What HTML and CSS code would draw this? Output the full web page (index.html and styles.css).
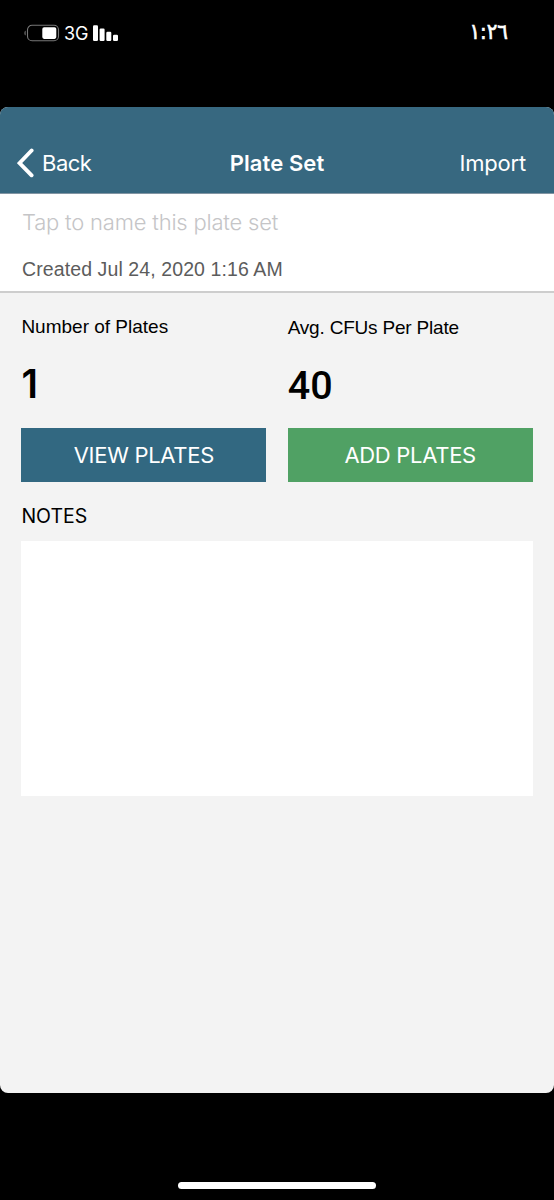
FILE: index.html
```html
<!DOCTYPE html>
<html lang="en">

<head>
  <meta charset="UTF-8" />
  <meta name="viewport" content="width=device-width, initial-scale=1.0, viewport-fit=cover">
  <meta name="theme-color" content="#000000">
  <title>Plate Set</title>
  <link rel="stylesheet" href="styles.css">
</head>

<body>
  <div class="status-bar">
    <div class="status-icons">
      <svg class="battery" width="36" height="18" viewBox="0 0 36 18">
        <path d="M1.6 6.5 Q0.4 7 0.4 9 Q0.4 11 1.6 11.5 Z" fill="#777" />
        <rect x="3.5" y="1.2" width="31" height="15.6" rx="4.5" fill="none" stroke="#777" stroke-width="1.1" />
        <rect x="18.3" y="3.3" width="14" height="11.6" rx="1.8" fill="#fff" />
      </svg>
      <span class="network">3G</span>
      <svg class="signal" width="26" height="17" viewBox="0 0 26 17">
        <rect x="0" y="0.3" width="5" height="15.7" rx="1.2" fill="#fff" />
        <rect x="6.6" y="3.6" width="5" height="12.4" rx="1.2" fill="#fff" />
        <rect x="13.3" y="6.8" width="5" height="9.2" rx="1.2" fill="#fff" />
        <rect x="20" y="9.8" width="5" height="6.2" rx="1.2" fill="#fff" />
      </svg>
    </div>
    <time class="clock">١:٢٦</time>
  </div>

  <div class="screen">
    <header>
      <a class="back-button">
        <svg width="17" height="30" viewBox="0 0 17 30">
          <path d="M14.6 2.5 L2.6 15 L14.6 27.3" fill="none" stroke="#fff" stroke-width="3.9" stroke-linecap="round" />
        </svg>
        <span class="back-label">Back</span>
      </a>
      <h1>Plate Set</h1>
      <a class="import-button">Import</a>
    </header>

    <section class="name-box">
      <p class="name-field">Tap to name this plate set</p>
      <p class="created">Created Jul 24, 2020 1:16 AM</p>
    </section>

    <main>
      <div class="stats">
        <div class="stat plates">
          <h2>Number of Plates</h2>
          <p class="value">1</p>
          <button class="btn btn-view">VIEW PLATES</button>
        </div>
        <div class="stat average">
          <h2>Avg. CFUs Per Plate</h2>
          <p class="value">40</p>
          <button class="btn btn-add">ADD PLATES</button>
        </div>
      </div>
      <h3>NOTES</h3>
      <div class="notes"></div>
    </main>
  </div>

  <div class="home-indicator"></div>
</body>

</html>
```
FILE: styles.css
```css
:root {
  --blue: #376880;
  --button-blue: #326881;
  --green: #50a164;
  --bg-light: #f3f3f3;
}

* {
  margin: 0;
  padding: 0;
  box-sizing: border-box;
}

body {
  height: 1200px;
  background: #000;
  font-family: Inter, 'Liberation Sans', sans-serif;
  display: flex;
  flex-direction: column;
  overflow: hidden;
  white-space: nowrap;
}

.status-bar {
  height: 107px;
  padding: 20px 46px 0 24px;
  display: flex;
  justify-content: space-between;
  align-items: flex-start;
  color: #fff;
}

.status-icons {
  height: 26px;
  display: flex;
  align-items: center;
}

.network {
  margin-left: 4px;
  width: 29px;
  font-size: 18px;
  font-weight: 400;
}

.clock {
  font-family: 'DejaVu Sans Condensed', 'DejaVu Sans', sans-serif;
  font-size: 22px;
  line-height: 24px;
  letter-spacing: -0.4px;
  -webkit-text-stroke: 0.6px #fff;
}

.screen {
  height: 986px;
  border-radius: 8px;
  background: var(--bg-light);
  overflow: hidden;
}

header {
  height: 87px;
  padding: 26px 17px 0;
  display: grid;
  grid-template-columns: 1fr auto 1fr;
  align-items: center;
  background: var(--blue);
  border-bottom: 1px solid #8295a3;
  color: #fff;
  font-size: 22px;
  font-weight: 400;
  letter-spacing: -0.2px;
}

.back-button {
  display: flex;
  align-items: center;
}

.back-label {
  margin-left: 8px;
  letter-spacing: -0.5px;
}

h1 {
  font-size: 22px;
  font-weight: 600;
  letter-spacing: 0.1px;
}

.import-button {
  padding-right: 11px;
  text-align: right;
}

.name-box {
  height: 99px;
  padding: 12px 22px 0;
  background: #fff;
  border-bottom: 2px solid #cdcdcd;
}

.name-field {
  color: #c5c5c7;
  font-size: 22px;
  font-weight: 300;
  line-height: 32px;
  letter-spacing: -0.2px;
}

.created {
  margin-top: 17px;
  color: #5c5c5c;
  font-family: 'Liberation Sans', sans-serif;
  font-size: 19.5px;
  line-height: 28px;
  letter-spacing: 0.1px;
}

main {
  padding: 21px 21.4px 0;
}

.stats {
  display: grid;
  grid-template-columns: 1fr 1fr;
  column-gap: 21.4px;
}

h2 {
  font-family: 'Liberation Sans', sans-serif;
  font-size: 19px;
  font-weight: normal;
  line-height: 26px;
}

.average h2 {
  padding-top: 1px;
  height: 26px;
  letter-spacing: -0.2px;
}

.value {
  height: 88px;
  padding-top: 19px;
  font-size: 39px;
  font-weight: 600;
  line-height: 50px;
}

.average .value {
  padding-top: 21px;
  font-family: Roboto, sans-serif;
  font-size: 39.5px;
  font-weight: 500;
}

.btn {
  display: block;
  width: 100%;
  height: 54px;
  padding-bottom: 1px;
  border: none;
  color: #fff;
  font-family: inherit;
  font-size: 22px;
  font-weight: 400;
  letter-spacing: -0.3px;
}

.btn-view {
  background: var(--button-blue);
}

.btn-add {
  background: var(--green);
}

h3 {
  height: 59px;
  padding-top: 19px;
  font-size: 19.5px;
  font-weight: 400;
  line-height: 30px;
}

.notes {
  height: 255px;
  background: #fff;
}

.home-indicator {
  width: 198px;
  height: 7px;
  margin: 89px auto 0;
  border-radius: 4px;
  background: #fff;
}
```
